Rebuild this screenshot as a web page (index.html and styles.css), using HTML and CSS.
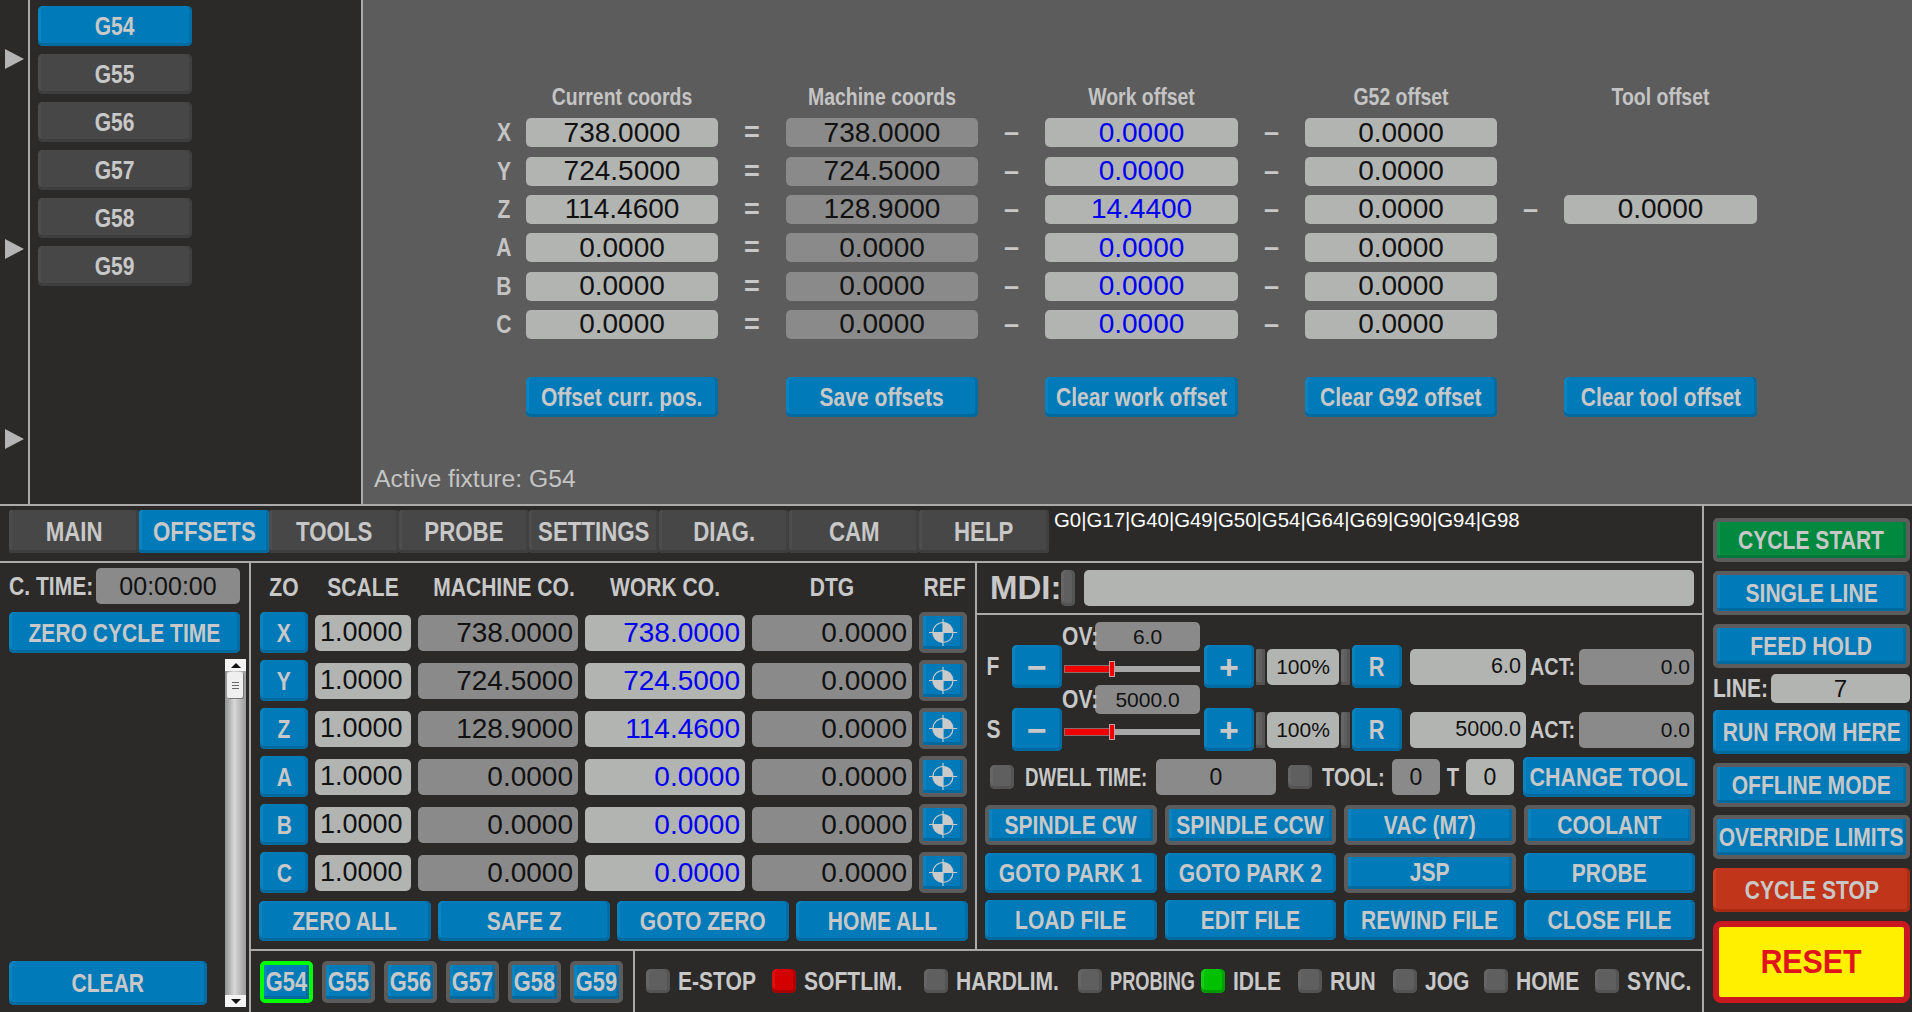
FILE: index.html
```html
<!DOCTYPE html>
<html lang="en">
<head>
  <meta charset="UTF-8">
  <title>CNC Control</title>
  <link rel="stylesheet" href="styles.css">
</head>
<body>
  <svg class="defs" width="0" height="0">
    <symbol id="reticle" viewBox="0 0 40 33">
      <path d="M20 16.500V6.500a10 10 0 0 1 10 10zM20 16.500v10a10 10 0 0 1-10-10z" fill="#cacaca"/>
      <circle cx="20" cy="16.500" r="10" fill="none" stroke="#cacaca" stroke-width="1.200"/>
      <path d="M20 3v27M6 16.500h28" stroke="#cacaca" stroke-width="1.200" fill="none"/>
    </symbol>
  </svg>

  <div class="top">
    <div class="rail">
      <span class="arrow"></span>
      <span class="arrow"></span>
      <span class="arrow"></span>
    </div>
    <div class="fixtures">
      <div class="btn"><span>G54</span></div>
      <div class="btn off"><span>G55</span></div>
      <div class="btn off"><span>G56</span></div>
      <div class="btn off"><span>G57</span></div>
      <div class="btn off"><span>G58</span></div>
      <div class="btn off"><span>G59</span></div>
    </div>
    <div class="offsets">
      <div class="offset-grid">
        <span></span><span class="head">Current coords</span><span></span><span class="head">Machine coords</span><span></span><span class="head">Work offset</span><span></span><span class="head">G52 offset</span><span></span><span class="head">Tool offset</span>

        <span class="axis">X</span><span class="fld">738.0000</span><span class="op">=</span><span class="fld dark">738.0000</span><span class="op">–</span><span class="fld blue">0.0000</span><span class="op">–</span><span class="fld">0.0000</span><span></span><span></span>
        <span class="axis">Y</span><span class="fld">724.5000</span><span class="op">=</span><span class="fld dark">724.5000</span><span class="op">–</span><span class="fld blue">0.0000</span><span class="op">–</span><span class="fld">0.0000</span><span></span><span></span>
        <span class="axis">Z</span><span class="fld">114.4600</span><span class="op">=</span><span class="fld dark">128.9000</span><span class="op">–</span><span class="fld blue">14.4400</span><span class="op">–</span><span class="fld">0.0000</span><span class="op">–</span><span class="fld">0.0000</span>
        <span class="axis">A</span><span class="fld">0.0000</span><span class="op">=</span><span class="fld dark">0.0000</span><span class="op">–</span><span class="fld blue">0.0000</span><span class="op">–</span><span class="fld">0.0000</span><span></span><span></span>
        <span class="axis">B</span><span class="fld">0.0000</span><span class="op">=</span><span class="fld dark">0.0000</span><span class="op">–</span><span class="fld blue">0.0000</span><span class="op">–</span><span class="fld">0.0000</span><span></span><span></span>
        <span class="axis">C</span><span class="fld">0.0000</span><span class="op">=</span><span class="fld dark">0.0000</span><span class="op">–</span><span class="fld blue">0.0000</span><span class="op">–</span><span class="fld">0.0000</span><span></span><span></span>

        <span></span><div class="btn offset-btn"><span>Offset curr. pos.</span></div><span></span><div class="btn offset-btn"><span>Save offsets</span></div><span></span><div class="btn offset-btn"><span>Clear work offset</span></div><span></span><div class="btn offset-btn"><span>Clear G92 offset</span></div><span></span><div class="btn offset-btn"><span>Clear tool offset</span></div>
      </div>
      <div class="active">Active fixture: G54</div>
    </div>
  </div>

  <div class="bottom">
    <div class="main">
      <div class="tabbar">
        <div class="tabs">
          <div class="btn off tab"><span>MAIN</span></div>
          <div class="btn tab"><span>OFFSETS</span></div>
          <div class="btn off tab"><span>TOOLS</span></div>
          <div class="btn off tab"><span>PROBE</span></div>
          <div class="btn off tab"><span>SETTINGS</span></div>
          <div class="btn off tab"><span>DIAG.</span></div>
          <div class="btn off tab"><span>CAM</span></div>
          <div class="btn off tab"><span>HELP</span></div>
        </div>
        <div class="gcodes">G0|G17|G40|G49|G50|G54|G64|G69|G90|G94|G98</div>
      </div>

      <div class="lower">
        <div class="log">
          <div class="ctime"><span class="lbl ctime-lbl">C. TIME:</span><span class="fld dark ctime-val">00:00:00</span></div>
          <div class="btn zero-time"><span>ZERO CYCLE TIME</span></div>
          <div class="scrollbar">
            <span class="sb-end"><i class="up"></i></span>
            <span class="sb-thumb"><b></b><b></b><b></b></span>
            <span class="sb-track"></span>
            <span class="sb-end"><i class="down"></i></span>
          </div>
          <div class="btn clear"><span>CLEAR</span></div>
        </div>

        <div class="center">
          <div class="work">
            <div class="dro">
              <div class="dro-grid">
                <span class="dro-head">ZO</span><span class="dro-head">SCALE</span><span class="dro-head">MACHINE CO.</span><span class="dro-head">WORK CO.</span><span class="dro-head">DTG</span><span class="dro-head">REF</span>

                <div class="btn"><span>X</span></div><span class="fld small">1.0000</span><span class="fld dark right">738.0000</span><span class="fld blue right">738.0000</span><span class="fld dark right">0.0000</span><div class="btn framed ref"><svg><use href="#reticle"/></svg></div>
                <div class="btn"><span>Y</span></div><span class="fld small">1.0000</span><span class="fld dark right">724.5000</span><span class="fld blue right">724.5000</span><span class="fld dark right">0.0000</span><div class="btn framed ref"><svg><use href="#reticle"/></svg></div>
                <div class="btn"><span>Z</span></div><span class="fld small">1.0000</span><span class="fld dark right">128.9000</span><span class="fld blue right">114.4600</span><span class="fld dark right">0.0000</span><div class="btn framed ref"><svg><use href="#reticle"/></svg></div>
                <div class="btn"><span>A</span></div><span class="fld small">1.0000</span><span class="fld dark right">0.0000</span><span class="fld blue right">0.0000</span><span class="fld dark right">0.0000</span><div class="btn framed ref"><svg><use href="#reticle"/></svg></div>
                <div class="btn"><span>B</span></div><span class="fld small">1.0000</span><span class="fld dark right">0.0000</span><span class="fld blue right">0.0000</span><span class="fld dark right">0.0000</span><div class="btn framed ref"><svg><use href="#reticle"/></svg></div>
                <div class="btn"><span>C</span></div><span class="fld small">1.0000</span><span class="fld dark right">0.0000</span><span class="fld blue right">0.0000</span><span class="fld dark right">0.0000</span><div class="btn framed ref"><svg><use href="#reticle"/></svg></div>
              </div>
              <div class="dro-actions">
                <div class="btn"><span>ZERO ALL</span></div>
                <div class="btn"><span>SAFE Z</span></div>
                <div class="btn"><span>GOTO ZERO</span></div>
                <div class="btn"><span>HOME ALL</span></div>
              </div>
            </div>

            <div class="controls">
              <div class="mdi">
                <span class="mdi-lbl">MDI:</span>
                <span class="led tall"></span>
                <span class="fld mdi-input"></span>
              </div>

              <div class="panel">
                <div class="ov-row">
                  <span class="lbl ov-lbl">OV:</span><span class="fld dark ov-val">6.0</span>
                </div>
                <div class="feed-row">
                  <span class="lbl rate-lbl">F</span>
                  <div class="btn step sym"><span>−</span></div>
                  <div class="slider"><span class="slider-fill"></span><span class="slider-thumb"></span></div>
                  <div class="btn step sym"><span>+</span></div>
                  <span class="led thin"></span>
                  <span class="fld pct">100%</span>
                  <span class="led thin"></span>
                  <div class="btn step reset-r"><span>R</span></div>
                  <span class="fld rate-val">6.0</span>
                  <span class="lbl act">ACT:</span>
                  <span class="fld dark act-val">0.0</span>
                </div>
                <div class="ov-row ov-second">
                  <span class="lbl ov-lbl">OV:</span><span class="fld dark ov-val">5000.0</span>
                </div>
                <div class="feed-row">
                  <span class="lbl rate-lbl">S</span>
                  <div class="btn step sym"><span>−</span></div>
                  <div class="slider"><span class="slider-fill"></span><span class="slider-thumb"></span></div>
                  <div class="btn step sym"><span>+</span></div>
                  <span class="led thin"></span>
                  <span class="fld pct">100%</span>
                  <span class="led thin"></span>
                  <div class="btn step reset-r"><span>R</span></div>
                  <span class="fld rate-val">5000.0</span>
                  <span class="lbl act">ACT:</span>
                  <span class="fld dark act-val">0.0</span>
                </div>

                <div class="dwell-row">
                  <span class="led"></span>
                  <span class="lbl dwell-lbl">DWELL TIME:</span>
                  <span class="fld dark dwell-val">0</span>
                  <span class="led"></span>
                  <span class="lbl tool-lbl">TOOL:</span>
                  <span class="fld dark tool-val">0</span>
                  <span class="t-lbl">T</span>
                  <span class="fld tool-val">0</span>
                  <div class="btn change-tool"><span>CHANGE TOOL</span></div>
                </div>

                <div class="actions">
                  <div class="btn framed"><span>SPINDLE CW</span></div>
                  <div class="btn framed"><span>SPINDLE CCW</span></div>
                  <div class="btn framed"><span>VAC (M7)</span></div>
                  <div class="btn framed"><span>COOLANT</span></div>
                  <div class="btn"><span>GOTO PARK 1</span></div>
                  <div class="btn"><span>GOTO PARK 2</span></div>
                  <div class="btn framed"><span>JSP</span></div>
                  <div class="btn"><span>PROBE</span></div>
                  <div class="btn"><span>LOAD FILE</span></div>
                  <div class="btn"><span>EDIT FILE</span></div>
                  <div class="btn"><span>REWIND FILE</span></div>
                  <div class="btn"><span>CLOSE FILE</span></div>
                </div>
              </div>
            </div>
          </div>

          <div class="statusbar">
            <div class="wcs">
              <div class="btn framed wcs-btn selected"><span>G54</span></div>
              <div class="btn framed wcs-btn"><span>G55</span></div>
              <div class="btn framed wcs-btn"><span>G56</span></div>
              <div class="btn framed wcs-btn"><span>G57</span></div>
              <div class="btn framed wcs-btn"><span>G58</span></div>
              <div class="btn framed wcs-btn"><span>G59</span></div>
            </div>
            <div class="leds">
              <div class="led-item"><span class="led"></span><span class="lbl">E-STOP</span></div>
              <div class="led-item"><span class="led red"></span><span class="lbl">SOFTLIM.</span></div>
              <div class="led-item"><span class="led"></span><span class="lbl">HARDLIM.</span></div>
              <div class="led-item"><span class="led"></span><span class="lbl squeezed">PROBING</span></div>
              <div class="led-item"><span class="led green"></span><span class="lbl">IDLE</span></div>
              <div class="led-item"><span class="led"></span><span class="lbl">RUN</span></div>
              <div class="led-item"><span class="led"></span><span class="lbl">JOG</span></div>
              <div class="led-item"><span class="led"></span><span class="lbl">HOME</span></div>
              <div class="led-item"><span class="led"></span><span class="lbl">SYNC.</span></div>
            </div>
          </div>
        </div>
      </div>
    </div>

    <div class="side">
      <div class="btn framed start"><span>CYCLE START</span></div>
      <div class="btn framed"><span>SINGLE LINE</span></div>
      <div class="btn framed"><span>FEED HOLD</span></div>
      <div class="line-row"><span class="lbl line-lbl">LINE:</span><span class="fld line-val">7</span></div>
      <div class="btn"><span>RUN FROM HERE</span></div>
      <div class="btn framed"><span>OFFLINE MODE</span></div>
      <div class="btn framed override"><span>OVERRIDE LIMITS</span></div>
      <div class="btn stop"><span>CYCLE STOP</span></div>
      <div class="reset"><span>RESET</span></div>
    </div>
  </div>
</body>
</html>
```

FILE: styles.css
```css
* {
  box-sizing: border-box;
}

body {
  margin: 0;
  width: 1912px;
  height: 1012px;
  overflow: hidden;
  background-color: #2b2a29;
  color: #c8c8c8;
  font-family: "Liberation Sans", Arial, sans-serif;
  font-weight: bold;
  font-size: 26px;
}

.defs {
  position: absolute;
}

/* shared widgets */
.btn {
  display: flex;
  flex: none;
  align-items: center;
  justify-content: center;
  padding-top: 1px;
  border-radius: 5px;
  background-color: #007ab8;
  color: #c8c8c8;
  white-space: nowrap;
  box-shadow: inset 0 -3px 0 #006a9f, inset -3px 0 0 #006da5, inset 3px 0 0 #0a84c0;
}

/* the UI font is a condensed Arial, so the labels get squeezed */
.btn span,
.reset span {
  display: inline-block;
  transform: scaleX(0.81);
}

.btn.off {
  background-color: #474747;
  box-shadow: inset 0 -3px 0 #3e3e3e, inset -3px 0 0 #404040, inset 3px 0 0 #4d4d4d;
}

.btn.framed {
  border: 4px solid #5c5c5c;
  padding-top: 0;
}

.fld {
  display: flex;
  flex: none;
  align-items: center;
  justify-content: center;
  border-radius: 5px;
  background-color: #b2b4b2;
  color: #111;
  font-weight: normal;
  font-size: 28px;
}

.fld.dark {
  background-color: #8a8a8a;
}

.fld.blue {
  color: #0000f0;
}

.fld.right {
  justify-content: flex-end;
  padding-right: 5px;
}

.lbl {
  display: inline-block;
  flex: none;
  white-space: nowrap;
  transform: scaleX(0.81);
  transform-origin: left center;
}

.lbl.squeezed {
  transform: scaleX(0.7);
}

.led {
  display: block;
  flex: none;
  width: 24px;
  height: 24px;
  border-radius: 5px;
  background-color: #5f5f5f;
  box-shadow: inset 0 -3px 0 #535353, inset -3px 0 0 #555, inset 3px 0 0 #656565;
}

.led.red {
  background-color: #d40000;
  box-shadow: inset 0 -3px 0 #a80000, inset -3px 0 0 #b00000, inset 3px 0 0 #dd1010;
}

.led.green {
  background-color: #00c000;
  box-shadow: inset 0 -3px 0 #009a00, inset -3px 0 0 #00a000, inset 3px 0 0 #10d010;
}

/* top area */
.top {
  display: flex;
  height: 504px;
}

.rail {
  display: flex;
  flex-direction: column;
  gap: 170px;
  width: 30px;
  padding: 49px 0 0 5px;
  border-right: 2px solid #aaa;
}

.arrow {
  width: 0;
  height: 0;
  border-left: 19px solid #b4b4b4;
  border-top: 10px solid transparent;
  border-bottom: 10px solid transparent;
}

.fixtures {
  display: flex;
  flex-direction: column;
  gap: 8px;
  width: 333px;
  padding: 6px 0 0 8px;
  border-right: 2px solid #aaa;
}

.fixtures .btn {
  width: 154px;
  height: 40px;
}

.offsets {
  flex: 1;
  padding: 83px 0 0 127px;
  background-color: #5c5c5c;
}

.offset-grid {
  display: grid;
  grid-template-columns: 36px 192px 68px 192px 67px 193px 67px 192px 67px 193px;
  grid-template-rows: 26px repeat(6, 29px) auto;
  row-gap: 9.330px;
}

.head {
  text-align: center;
  font-size: 24px;
  color: #c4c4c4;
  white-space: nowrap;
  transform: scaleX(0.81);
}

.axis {
  align-self: center;
  padding-right: 10px;
  text-align: center;
  color: #c4c4c4;
  transform: scaleX(0.81);
}

.op {
  align-self: center;
  text-align: center;
  color: #c8c8c8;
  font-size: 27px;
  line-height: 29px;
}

.offset-btn {
  height: 40px;
  margin-top: 29px;
}

.active {
  margin: 48px 0 0 -116px;
  color: #c4c4c4;
  font-weight: normal;
  font-size: 24.700px;
}

/* lower area */
.bottom {
  display: flex;
  height: 508px;
  border-top: 2px solid #aaa;
}

.main {
  flex: none;
  width: 1704px;
  border-right: 2px solid #aaa;
}

.tabbar {
  display: flex;
  height: 57px;
  padding: 4px 0 0 9px;
  border-bottom: 2px solid #aaa;
}

.tabs {
  display: flex;
  height: 43px;
}

.tab {
  width: 130px;
  height: 43px;
  border-radius: 3px;
  font-size: 27.500px;
}

.gcodes {
  margin-left: 5px;
  color: #fff;
  font-weight: normal;
  font-size: 20.400px;
  line-height: 20px;
}

.lower {
  display: flex;
  height: 449px;
}

/* cycle time and log */
.log {
  position: relative;
  display: flex;
  flex-direction: column;
  flex: none;
  width: 251px;
  padding: 5px 0 0 9px;
  border-right: 2px solid #aaa;
}

.ctime {
  display: flex;
  align-items: center;
  height: 36px;
}

.ctime-lbl {
  width: 87px;
}

.ctime-val {
  width: 144px;
  height: 36px;
  font-size: 25px;
}

.zero-time {
  width: 231px;
  height: 41px;
  margin-top: 8px;
}

.clear {
  width: 198px;
  height: 44px;
  margin-top: 308px;
}

/* the scrollbar lies over the log list */
.scrollbar {
  position: absolute;
  left: 225px;
  top: 96px;
  display: flex;
  flex-direction: column;
  width: 21px;
  height: 348px;
  background: linear-gradient(90deg, #8f9090, #d8d8d8 45%, #9a9a9a);
}

.sb-end {
  display: flex;
  align-items: center;
  justify-content: center;
  flex: none;
  height: 12px;
  background-color: #f4f4f4;
}

.sb-end i {
  width: 0;
  height: 0;
  border-left: 5px solid transparent;
  border-right: 5px solid transparent;
}

.sb-end .up {
  border-bottom: 5px solid #111;
}

.sb-end .down {
  border-top: 5px solid #111;
}

.sb-thumb {
  display: flex;
  flex-direction: column;
  align-items: center;
  justify-content: center;
  gap: 2px;
  flex: none;
  width: 16px;
  height: 26px;
  margin: 1px 0 0 2px;
  border-radius: 2px;
  background-color: #efefef;
  box-shadow: 1px 1px 0 #777;
}

.sb-thumb b {
  width: 7px;
  height: 1px;
  background-color: #666;
}

.sb-track {
  flex: 1;
}

/* DRO table */
.center {
  flex: 1;
}

.work {
  display: flex;
  height: 388px;
  border-bottom: 2px solid #aaa;
}

.dro {
  flex: none;
  width: 726px;
  padding-left: 9px;
  border-right: 2px solid #aaa;
}

.dro-grid {
  display: grid;
  grid-template-columns: 48px 96px 160px 160px 160px 48px;
  grid-template-rows: 42px repeat(6, 41px);
  gap: 7px;
  align-items: center;
}

.dro-head {
  padding-top: 6px;
  text-align: center;
  white-space: nowrap;
  transform: scaleX(0.81);
}

.dro-grid .btn {
  height: 41px;
}

.dro-grid .fld {
  height: 36px;
}

.dro-grid .small {
  justify-content: flex-start;
  padding-left: 5px;
  font-size: 27px;
}

.ref svg {
  width: 40px;
  height: 33px;
}

.dro-actions {
  display: grid;
  grid-template-columns: repeat(4, 172px);
  column-gap: 7px;
  margin: 8px 0 0 -1px;
}

.dro-actions .btn {
  height: 40px;
}

/* MDI and overrides */
.controls {
  flex: 1;
}

.mdi {
  display: flex;
  align-items: center;
  height: 52px;
  padding-left: 13px;
  border-bottom: 2px solid #aaa;
}

.mdi-lbl {
  width: 71px;
  font-size: 33px;
}

.led.tall {
  width: 14px;
  height: 36px;
}

.mdi-input {
  width: 610px;
  height: 36px;
  margin-left: 9px;
}

.panel {
  padding: 7px 0 0 8px;
}

.ov-row {
  display: flex;
  align-items: center;
  height: 29px;
  margin-left: 77px;
}

.ov-second {
  margin-top: -3px;
}

.ov-lbl {
  width: 33px;
}

.ov-val {
  width: 105px;
  height: 29px;
  font-size: 21px;
}

.feed-row {
  display: flex;
  align-items: center;
  height: 43px;
  margin-top: -6px;
}

.rate-lbl {
  width: 27px;
  padding-left: 2px;
}

.step {
  width: 50px;
  height: 43px;
  font-size: 27px;
}

.sym {
  font-size: 34px;
}

.sym span {
  transform: none;
}

.slider {
  position: relative;
  flex: none;
  width: 135px;
  height: 6px;
  margin: 4px 4px 0 3px;
  background-color: #a8a8a8;
}

.slider-fill {
  display: block;
  width: 46px;
  height: 6px;
  background-color: #f00000;
  box-shadow: 0 0 0 1px #8a6a6a;
}

/* thumb sits on the slider track */
.slider-thumb {
  position: absolute;
  left: 44px;
  top: -5px;
  width: 6px;
  height: 16px;
  background-color: #f00000;
  border: 1px solid #c8a0a0;
}

.led.thin {
  width: 9px;
  height: 36px;
  margin-left: 2px;
  border-radius: 2px;
}

.pct {
  width: 72px;
  height: 36px;
  margin-left: 2px;
  font-size: 21px;
}

.pct + .led.thin {
  margin-right: 2px;
}

.rate-val {
  justify-content: flex-end;
  width: 116px;
  height: 36px;
  margin-left: 8px;
  padding-right: 5px;
  font-size: 21.500px;
}

.act {
  width: 49px;
  margin-left: 4px;
  font-size: 24.500px;
}

.act-val {
  justify-content: flex-end;
  width: 115px;
  height: 36px;
  padding-right: 4px;
  font-size: 21px;
}

.dwell-row {
  display: flex;
  align-items: center;
  height: 40px;
  margin: 6px 0 0 5px;
}

.dwell-lbl {
  width: 131px;
  margin-left: 11px;
  transform: scaleX(0.72);
}

.dwell-val {
  width: 120px;
  height: 36px;
  margin-right: 12px;
  font-size: 23px;
}

.tool-lbl {
  width: 70px;
  margin-left: 10px;
  font-size: 25px;
}

.tool-val {
  width: 48px;
  height: 36px;
  font-size: 23px;
}

.t-lbl {
  width: 26px;
  flex: none;
  text-align: center;
  font-size: 25px;
  transform: scaleX(0.81);
}

.change-tool {
  width: 172px;
  height: 40px;
  margin-left: 9px;
  font-size: 26.500px;
}

.actions {
  display: grid;
  grid-template-columns: repeat(4, 171.500px);
  grid-template-rows: repeat(3, 40px);
  gap: 7.500px 8px;
  margin-top: 8px;
}

/* status bar */
.statusbar {
  display: flex;
  height: 61px;
}

.wcs {
  display: flex;
  flex: none;
  gap: 9px;
  width: 384px;
  padding: 10px 0 0 9px;
  border-right: 2px solid #aaa;
}

.wcs-btn {
  width: 53px;
  height: 42px;
  font-size: 27px;
}

.wcs-btn.selected {
  border-color: #00ff00;
}

.leds {
  display: grid;
  grid-template-columns: 126px 152px 154px 123px 97px 95px 91px 111px 90px;
  align-items: center;
  height: 42px;
  margin: 9px 0 0 11px;
}

.led-item {
  display: flex;
  align-items: center;
  gap: 8px;
}

/* right column */
.side {
  display: flex;
  flex-direction: column;
  gap: 9px;
  flex: 1;
  min-width: 0;
  padding: 12px 0 0 9px;
}

.side .btn {
  width: 197px;
  height: 44px;
}

.side .start {
  background-color: #00893f;
  box-shadow: inset 0 -3px 0 #00773a, inset -3px 0 0 #007a38, inset 3px 0 0 #0a9548;
}

.side .stop {
  background-color: #c1351a;
  box-shadow: inset 0 -3px 0 #a82c14, inset -3px 0 0 #ab2d14, inset 3px 0 0 #d04020;
}

.side .override {
  margin-top: -1px;
}

.line-row {
  display: flex;
  align-items: center;
  height: 29px;
  margin: -3px 0 -2px;
}

.line-lbl {
  width: 58px;
}

.line-val {
  width: 139px;
  height: 29px;
  font-size: 24px;
}

.reset {
  display: flex;
  flex: none;
  align-items: center;
  justify-content: center;
  width: 197px;
  height: 82px;
  border: 6px solid #c9181f;
  border-radius: 8px;
  background-color: #fff000;
  color: #e0141c;
  font-size: 33px;
}

.reset span {
  transform: scaleX(0.92);
}
```
